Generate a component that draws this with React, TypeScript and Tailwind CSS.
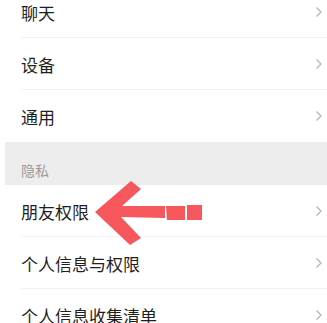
import React from "react";

const Chevron = () => (
  <svg width="8" height="12" viewBox="0 0 8 12" className="shrink-0">
    <path d="M1.5 1.5 L6 6 L1.5 10.5" fill="none" stroke="#b5b5b5" strokeWidth="1.3" />
  </svg>
);

const Row = ({ label, divider = true }: { label: string; divider?: boolean }) => (
  <div className="relative flex h-[52px] items-center justify-between pl-[16px] pr-[4px]">
    <span className="text-[17px] text-[#1f1f1f] leading-none">{label}</span>
    <Chevron />
    {divider && <div className="absolute bottom-0 left-[16px] right-0 h-px bg-[#f3f3f3]" />}
  </div>
);

export default function App() {
  return (
    <div
      className="relative h-[323px] w-[327px] overflow-hidden bg-white"
      style={{ fontFamily: '"Noto Sans CJK SC", "Noto Sans", sans-serif' }}
    >
      <div className="ml-[5px] -mt-[14px] flex flex-col">
        <Row label="聊天" />
        <Row label="设备" />
        <Row label="通用" divider={false} />
        <div className="flex h-[43px] items-end bg-[#ededed] pb-[5px] pl-[16px]">
          <span className="text-[14px] leading-[20px] text-[#9a9a9a]">隐私</span>
        </div>
        <Row label="朋友权限" />
        <Row label="个人信息与权限" />
        <Row label="个人信息收集清单" />
      </div>
      <svg
        className="pointer-events-none absolute left-0 top-0"
        width="327"
        height="323"
        viewBox="0 0 327 323"
      >
        <g fill="#f5575c">
          <polygon points="95,212 131,181 141,189 122,206 165,206 165,218 121,217 141,238 130,245" />
          <polygon points="166,206 185,206 185,220 167,220" />
          <polygon points="187,205 202,205 202,220 187,220" />
        </g>
      </svg>
    </div>
  );
}
